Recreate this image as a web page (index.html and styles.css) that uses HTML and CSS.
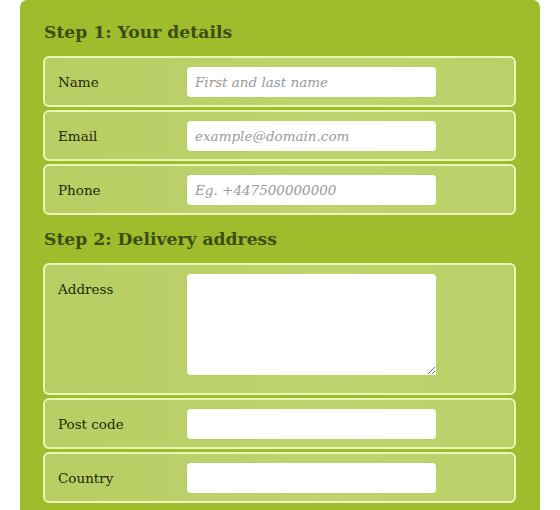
FILE: index.html
```html
<!DOCTYPE html>
<html>
<head>
<meta charset="utf-8">
<link rel="stylesheet" href="styles.css">
</head>
<body>
<form class="panel">
  <h2 class="step">Step 1: Your details</h2>
  <div class="row"><label class="lbl">Name</label><input class="field" type="text" placeholder="First and last name"></div>
  <div class="row"><label class="lbl">Email</label><input class="field" type="text" placeholder="example@domain.com"></div>
  <div class="row"><label class="lbl">Phone</label><input class="field" type="text" placeholder="Eg. +447500000000"></div>
  <h2 class="step step2">Step 2: Delivery address</h2>
  <div class="row tall"><label class="lbl">Address</label><textarea class="field area"></textarea></div>
  <div class="row"><label class="lbl">Post code</label><input class="field" type="text"></div>
  <div class="row"><label class="lbl">Country</label><input class="field" type="text"></div>
</form>
</body>
</html>
```
FILE: styles.css
```css
html, body { margin: 0; padding: 0; background: #fff; }
body { font-family: "DejaVu Serif", Georgia, serif; }
.panel {
  margin-left: 20px;
  width: 520px;
  height: 510px;
  box-sizing: border-box;
  padding: 21px 24px 0 23px;
  background: #9ebc2c;
  border-radius: 7px 7px 0 0;
  display: flex;
  flex-direction: column;
  gap: 3px;
}
.step {
  margin: 0 0 10px 1px;
  font-size: 17.2px;
  line-height: 22px;
  font-weight: bold;
  color: #3b4d12;
}
.step2 { margin-top: 10px; }
.row {
  height: 51px;
  flex: none;
  box-sizing: border-box;
  border: 2px solid #e9f6b8;
  border-radius: 6px;
  background: linear-gradient(90deg, #b8cd63, #bfd36e 60%, #bbd068);
  display: flex;
  align-items: flex-start;
  padding: 9px 0 0 13px;
}
.row.tall { height: 132px; }
.lbl {
  width: 129px;
  flex: none;
  font-size: 13.5px;
  line-height: 30px;
  color: #1e2a08;
}
.field {
  width: 249px;
  height: 30px;
  box-sizing: border-box;
  border: none;
  border-radius: 4px;
  background: #fff;
  padding: 0 8px;
  font-family: "DejaVu Serif", Georgia, serif;
  font-style: italic;
  font-size: 13.5px;
  color: #333;
  outline: none;
}
.field::placeholder { color: #9a9a9a; font-style: italic; }
.area { height: 101px; resize: vertical; border-radius: 4px 4px 0 4px; }
```
